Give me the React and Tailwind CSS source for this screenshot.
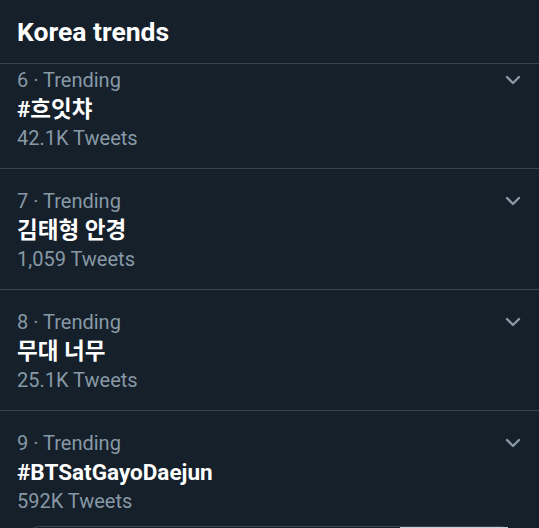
import React from "react";

const trends = [
  { rank: 6, title: "#흐잇챠", count: "42.1K Tweets" },
  { rank: 7, title: "김태형 안경", count: "1,059 Tweets" },
  { rank: 8, title: "무대 너무", count: "25.1K Tweets" },
  { rank: 9, title: "#BTSatGayoDaejun", count: "592K Tweets" },
];

const Chevron = () => (
  <svg width="16" height="10" viewBox="0 0 16 10" className="mt-[9px]">
    <polyline
      points="2,2 8,8 14,2"
      fill="none"
      stroke="#8899a6"
      strokeWidth="2.4"
      strokeLinecap="round"
      strokeLinejoin="round"
    />
  </svg>
);

const TrendRow = ({ trend, first }) => (
  <div
    className={`flex justify-between border-t border-[#38444d] pl-[17px] pr-[18px] pb-[15px] ${
      first ? "pt-[2px]" : "pt-[18px]"
    }`}
  >
    <div className="flex flex-col">
      <span className="text-[20px] leading-[29px] text-[#8899a6]">
        {trend.rank} · Trending
      </span>
      <span className="text-[22.5px] leading-[29px] font-bold text-white">
        {trend.title}
      </span>
      <span className="text-[20px] leading-[29px] text-[#8899a6]">
        {trend.count}
      </span>
    </div>
    <Chevron />
  </div>
);

export default function App() {
  return (
    <div
      className="w-[539px] h-[528px] overflow-hidden bg-[#15202b]"
      style={{ fontFamily: "Roboto, 'Noto Sans CJK KR', sans-serif" }}
    >
      <div className="h-[63px] flex items-center pl-[17px]">
        <h1 className="text-[26.5px] font-bold text-white">Korea trends</h1>
      </div>
      {trends.map((t, i) => (
        <TrendRow key={t.rank} trend={t} first={i === 0} />
      ))}
      <div className="ml-[27px] mr-[27px] -mt-[5px] h-10 rounded-t-xl border border-[#38444d] flex justify-end">
        <div className="w-[108px] h-full bg-[#c9cdd2] mr-[3px]" />
      </div>
    </div>
  );
}
